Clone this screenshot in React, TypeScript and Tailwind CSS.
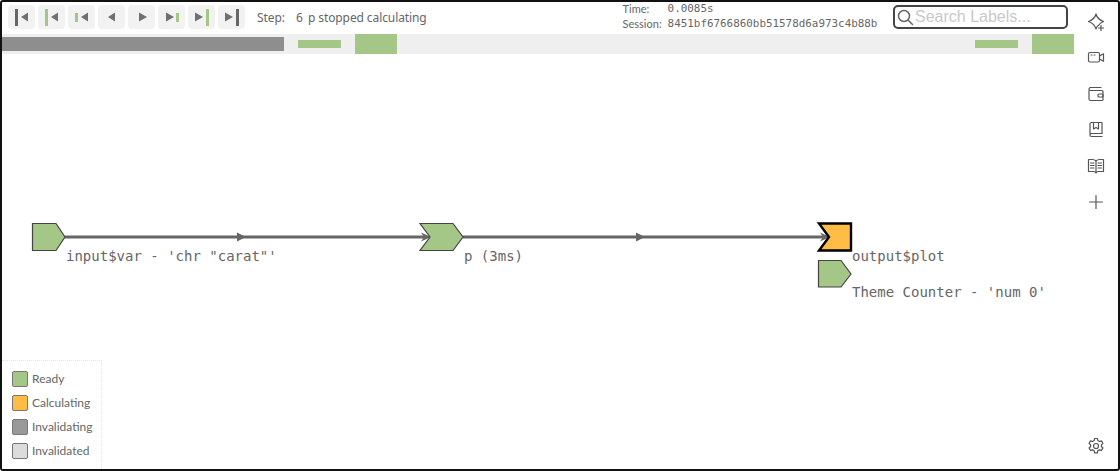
import React from "react";

const G = "#a4c686";
const D = "#666666";

type Bar = { x: number; h: number; c: string };
const buttons: { tri: number; dir: "l" | "r"; bar: Bar }[] = [
  { tri: 13, dir: "l", bar: { x: 7, h: 17, c: D } },
  { tri: 13, dir: "l", bar: { x: 7, h: 17, c: G } },
  { tri: 13, dir: "l", bar: { x: 7, h: 9, c: G } },
  { tri: 10, dir: "l", bar: { x: 0, h: 0, c: G } },
  { tri: 11, dir: "r", bar: { x: 0, h: 0, c: G } },
  { tri: 8, dir: "r", bar: { x: 18, h: 9, c: G } },
  { tri: 7, dir: "r", bar: { x: 18, h: 17, c: G } },
  { tri: 7, dir: "r", bar: { x: 18, h: 17, c: D } },
];

function StepButton({ tri, dir, bar }: { tri: number; dir: "l" | "r"; bar: Bar }) {
  const pts =
    dir === "l"
      ? `${tri + 7},7.5 ${tri + 7},16.5 ${tri},12`
      : `${tri},7.5 ${tri},16.5 ${tri + 8},12`;
  return (
    <div className="w-[27px] h-[24px] rounded-[4px] bg-[#f2f2f2]">
      <svg width="27" height="24" viewBox="0 0 27 24">
        <polygon points={pts} fill="#707070" />
        {bar.h > 0 && <rect x={bar.x} y={12.5 - bar.h / 2} width="3" height={bar.h} fill={bar.c} />}
      </svg>
    </div>
  );
}

function SideIcon({ children }: { children: React.ReactNode }) {
  return (
    <svg width="20" height="20" viewBox="0 0 20 20" fill="none" stroke="#555555" strokeWidth="1.2" strokeLinejoin="round" strokeLinecap="round">
      {children}
    </svg>
  );
}

function Legend({ color, border, label }: { color: string; border: string; label: string }) {
  return (
    <div className="flex items-center h-[24px]">
      <div className={`w-[16px] h-[16px] rounded-[2px] border ${color} ${border}`} />
      <span className="ml-[4px] text-[12px] text-[#666666] font-['Lato',sans-serif]">{label}</span>
    </div>
  );
}

export default function App() {
  return (
    <div className="w-[1120px] h-[471px] border-2 border-[#111111] rounded-[3px] bg-white flex overflow-hidden font-['Noto_Sans',sans-serif]">
      <div className="w-[1072px] flex flex-col">
        <div className="h-[32px] flex items-start">
          <div className="flex gap-[3px] ml-[6px] mt-[3px]">
            {buttons.map((b, i) => (
              <StepButton key={i} {...b} />
            ))}
          </div>
          <div className="ml-[12px] mt-[8px] flex text-[12px] leading-[16px] text-[#666666] tracking-[-0.1px]">
            <span className="w-[39px]">Step:</span>
            <span className="w-[12px]">6</span>
            <span>p stopped calculating</span>
          </div>
          <div className="ml-[196px] -mt-[1px] text-[11px] leading-[15px] text-[#666666] font-['Lato',sans-serif]">
            <div className="flex">
              <span className="w-[45px]">Time:</span>
              <span className="font-['DejaVu_Sans_Mono',monospace] text-[10.9px]">0.0085s</span>
            </div>
            <div className="flex">
              <span className="w-[45px]">Session:</span>
              <span className="font-['DejaVu_Sans_Mono',monospace] text-[10.9px]">8451bf6766860bb51578d6a973c4b88b</span>
            </div>
          </div>
          <div className="ml-auto mr-[6px] mt-[3px] w-[175px] h-[24px] border-2 border-[#444444] rounded-[5px] flex items-center pl-[1px]">
            <svg width="18" height="18" viewBox="0 0 18 18" fill="none" stroke="#666666" strokeWidth="1.5" strokeLinecap="round">
              <circle cx="8" cy="8" r="5.5" />
              <path d="M12 12l4.5 4.5" />
            </svg>
            <span className="ml-[1px] text-[16px] text-[#c9c9c9] font-['Liberation_Sans',sans-serif]">Search Labels...</span>
          </div>
        </div>
        <div className="h-[20px] bg-[#efefef] flex items-center">
          <div className="w-[282px] h-[14px] bg-[#8e8e8e]" />
          <div className="ml-[14px] w-[43px] h-[8px] bg-[#a4c686]" />
          <div className="ml-[14px] w-[42px] h-[20px] bg-[#a4c686]" />
          <div className="ml-[578px] w-[43px] h-[8px] bg-[#a4c686]" />
          <div className="ml-auto w-[42px] h-[20px] bg-[#a4c686]" />
        </div>
        <div className="relative flex-1">
          <svg className="absolute inset-0" width="1072" height="415" viewBox="2 54 1072 415">
            <g stroke="#666666" strokeWidth="3">
              <path d="M65 237H425" />
              <path d="M463 237H825" />
            </g>
            <g fill="#666666">
              <polygon points="237,232.5 237,241.5 246,237" />
              <polygon points="421,232.5 424,237 421,241.5 431,237" />
              <polygon points="636,232.5 636,241.5 645,237" />
              <polygon points="820,232.5 823,237 820,241.5 830,237" />
            </g>
            <g fill="#a4c686" stroke="#444444" strokeWidth="1.2" strokeLinejoin="miter">
              <polygon points="32.5,223.5 56,223.5 65,237 56,250.5 32.5,250.5" />
              <polygon points="420,223.5 453,223.5 463,237 453,250.5 420,250.5 430,237" />
              <polygon points="818.5,260.5 841,260.5 851,274 841,287 818.5,287" />
            </g>
            <polygon points="819,223.5 851,223.5 851,250.5 819,250.5 829,237" fill="#ffbd45" stroke="#000000" strokeWidth="2.4" />
            <g fill="#666666" fontSize="14" className="font-['DejaVu_Sans_Mono',monospace]">
              <text x="66" y="261">input$var - 'chr "carat"'</text>
              <text x="464" y="261">p (3ms)</text>
              <text x="852" y="261">output$plot</text>
              <text x="852" y="297">Theme Counter - 'num 0'</text>
            </g>
          </svg>
          <div className="absolute left-0 bottom-0 w-[100px] h-[109px] border-t border-r border-dotted border-[#e4e4e4] pl-[10px] pt-[6px] bg-white">
            <Legend color="bg-[#a4c686]" border="border-[#777777]" label="Ready" />
            <Legend color="bg-[#ffbd45]" border="border-[#777777]" label="Calculating" />
            <Legend color="bg-[#999999]" border="border-[#777777]" label="Invalidating" />
            <Legend color="bg-[#dcdcdc]" border="border-[#777777]" label="Invalidated" />
          </div>
        </div>
      </div>
      <div className="flex-1 flex flex-col items-center pt-[10px]">
        <div className="flex flex-col gap-[16px]">
          <SideIcon>
            <path d="M10 2C10.8 5.5 12.500 7.500 17.500 9.500C15 10.500 13.500 11.800 12.500 13.500M10 2C9.200 5.500 7.500 7.500 2.500 9.500C7.500 11.500 9.200 13.500 10 17C10.300 16 10.800 15 11.500 14" />
            <path d="M15 13.500v5M12.500 16h5" />
          </SideIcon>
          <SideIcon>
            <g transform="translate(0 -1)">
              <rect x="2.500" y="5.500" width="11" height="9.500" rx="1.500" />
              <path d="M13.500 9l4-2.200v7.400l-4-2.200" />
              <path d="M5 8h1M8 8h1" />
            </g>
          </SideIcon>
          <SideIcon>
            <path d="M3 6.500V15a1.500 1.500 0 0 0 1.500 1.500H16a1 1 0 0 0 1-1V7.500a1 1 0 0 0-1-1H4.500A1.500 1.500 0 0 1 3 5v0a1.500 1.500 0 0 1 1.500-1.500H15" />
            <rect x="12" y="10" width="5" height="3" rx="1" />
          </SideIcon>
          <SideIcon>
            <path d="M4 15V4a1.500 1.500 0 0 1 1.500-1.500H16v11H5.500A1.500 1.500 0 0 0 4 15a1.500 1.500 0 0 0 1.500 1.500H16" />
            <path d="M7.500 2.500V9l2.500-1.600L12.500 9V2.500" />
          </SideIcon>
          <SideIcon>
            <path d="M10 5v12M10 5c-1-1-2-1.500-3.500-1.500H2.500v12h5c1 0 2 .5 2.500 1.500.5-1 1.500-1.500 2.500-1.500h5v-12h-4C12 3.500 11 4 10 5z" />
            <path d="M4.500 7h3.500M4.500 9.500h3.500M4.500 12h3.500M12 7h3.500M12 9.500h3.500M12 12h3.500" />
          </SideIcon>
          <SideIcon>
            <path d="M10 3.500v13M3.500 10h13" />
          </SideIcon>
        </div>
        <div className="mt-auto mb-[13px]">
          <SideIcon>
            <circle cx="10" cy="10" r="2.500" />
            <path d="M8.600 2.500h2.800l.5 2.100 1.500.9 2.100-.6 1.400 2.400-1.500 1.500v1.700l1.500 1.500-1.400 2.400-2.100-.6-1.500.9-.5 2.100H8.600l-.5-2.100-1.500-.9-2.100.6-1.400-2.400 1.500-1.500V8.800L3.100 7.300l1.400-2.400 2.100.6 1.500-.9z" />
          </SideIcon>
        </div>
      </div>
    </div>
  );
}
